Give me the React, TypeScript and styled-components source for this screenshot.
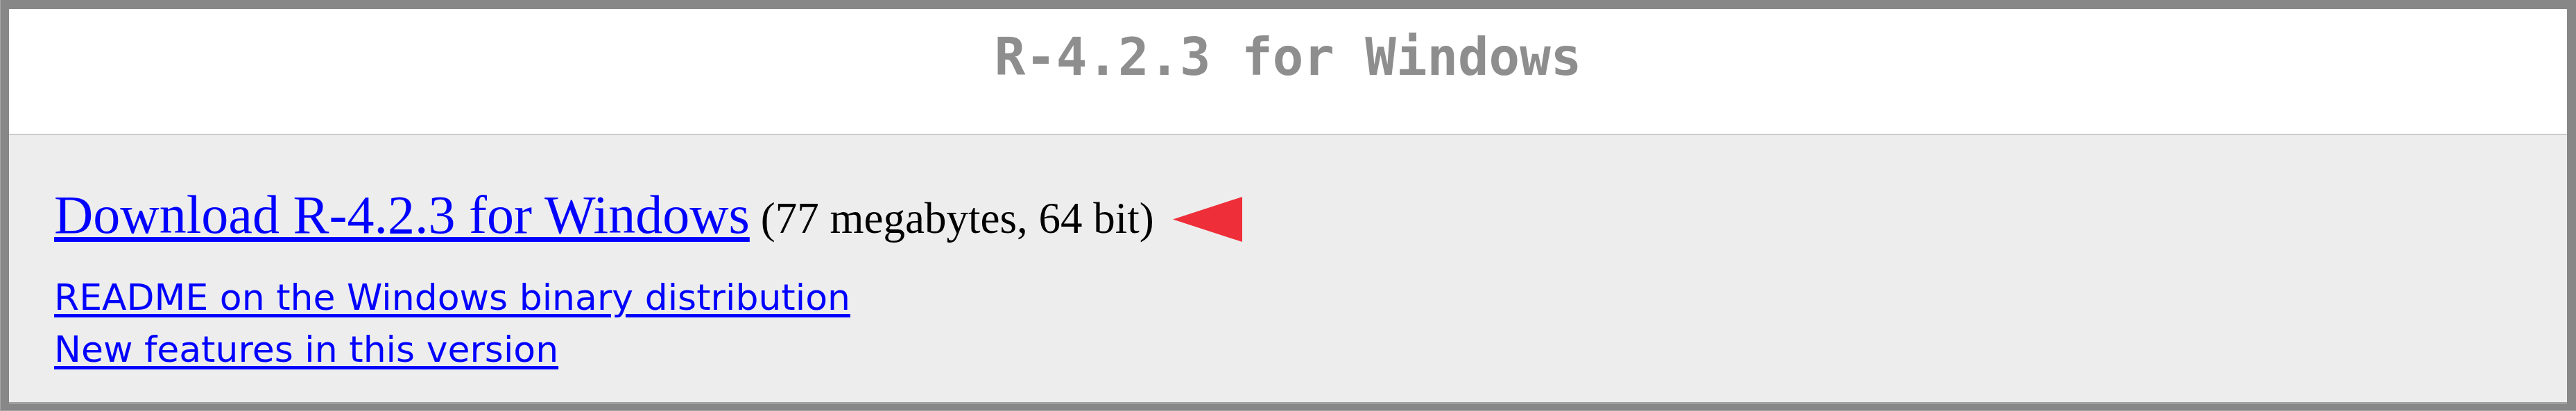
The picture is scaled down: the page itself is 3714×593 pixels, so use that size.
import React from "react";
import styled, { createGlobalStyle } from "styled-components";

const GlobalStyle = createGlobalStyle`
  html, body {
    margin: 0;
    padding: 0;
    background: #878787;
  }
  body {
    font-family: "Liberation Serif", "Times New Roman", serif;
  }
`;

const Frame = styled.div`
  box-sizing: border-box;
  width: 3714px;
  height: 593px;
  background: #878787;
  border-left: 1px solid #a6a6a6;
  border-bottom: 1px solid #a6a6a6;
  padding: 13px 13px 9px 12px;
  display: flex;
`;

const Panel = styled.div`
  flex: 1;
  display: flex;
  flex-direction: column;
  background: #ededed;
  border-bottom: 3px solid #a0a0a0;
`;

const Header = styled.header`
  box-sizing: border-box;
  height: 182px;
  padding-top: 26px;
  background: #ffffff;
  border-bottom: 2px solid #cccccc;
  text-align: center;
`;

const Title = styled.h1`
  margin: 0;
  font-family: "DejaVu Sans Mono", "Liberation Mono", monospace;
  font-weight: bold;
  font-size: 74px;
  line-height: 86px;
  color: #8e8e8e;
`;

const Body = styled.section`
  flex: 1;
  display: flex;
  flex-direction: column;
  padding: 70px 0 0 65px;
`;

const DownloadLine = styled.p`
  margin: 0;
  display: flex;
  align-items: baseline;
  font-family: "Liberation Serif", "Times New Roman", serif;
  line-height: 90px;
  height: 90px;
`;

const MainLink = styled.a`
  font-size: 78px;
  color: #0000ff;
  text-decoration: underline;
  text-decoration-thickness: 7px;
  text-underline-offset: 6px;
`;

const SizeNote = styled.span`
  font-size: 63px;
  color: #000000;
  margin-left: 16px;
`;

const Pointer = styled.svg`
  align-self: center;
  margin-left: 27px;
  margin-top: 12px;
  flex: none;
`;

const LinkList = styled.ul`
  list-style: none;
  margin: 37px 0 0 0;
  padding: 0;
`;

const LinkItem = styled.li`
  font-family: "DejaVu Sans", Verdana, sans-serif;
  font-size: 52px;
  line-height: 75px;
`;

const SmallLink = styled.a`
  color: #0000ff;
  text-decoration: underline;
  text-decoration-thickness: 5px;
  text-underline-offset: 6px;
`;

export default function App() {
  return (
    <>
      <GlobalStyle />
      <Frame>
        <Panel>
          <Header>
            <Title>R-4.2.3 for Windows</Title>
          </Header>
          <Body>
            <DownloadLine>
              <MainLink href="#">Download R-4.2.3 for Windows</MainLink>
              <SizeNote>(77 megabytes, 64 bit)</SizeNote>
              <Pointer width="100" height="65" viewBox="0 0 100 65" aria-hidden="true">
                <polygon points="0,32.5 100,0 100,65" fill="#ee2e38" />
              </Pointer>
            </DownloadLine>
            <LinkList>
              <LinkItem>
                <SmallLink href="#">README on the Windows binary distribution</SmallLink>
              </LinkItem>
              <LinkItem>
                <SmallLink href="#">New features in this version</SmallLink>
              </LinkItem>
            </LinkList>
          </Body>
        </Panel>
      </Frame>
    </>
  );
}
